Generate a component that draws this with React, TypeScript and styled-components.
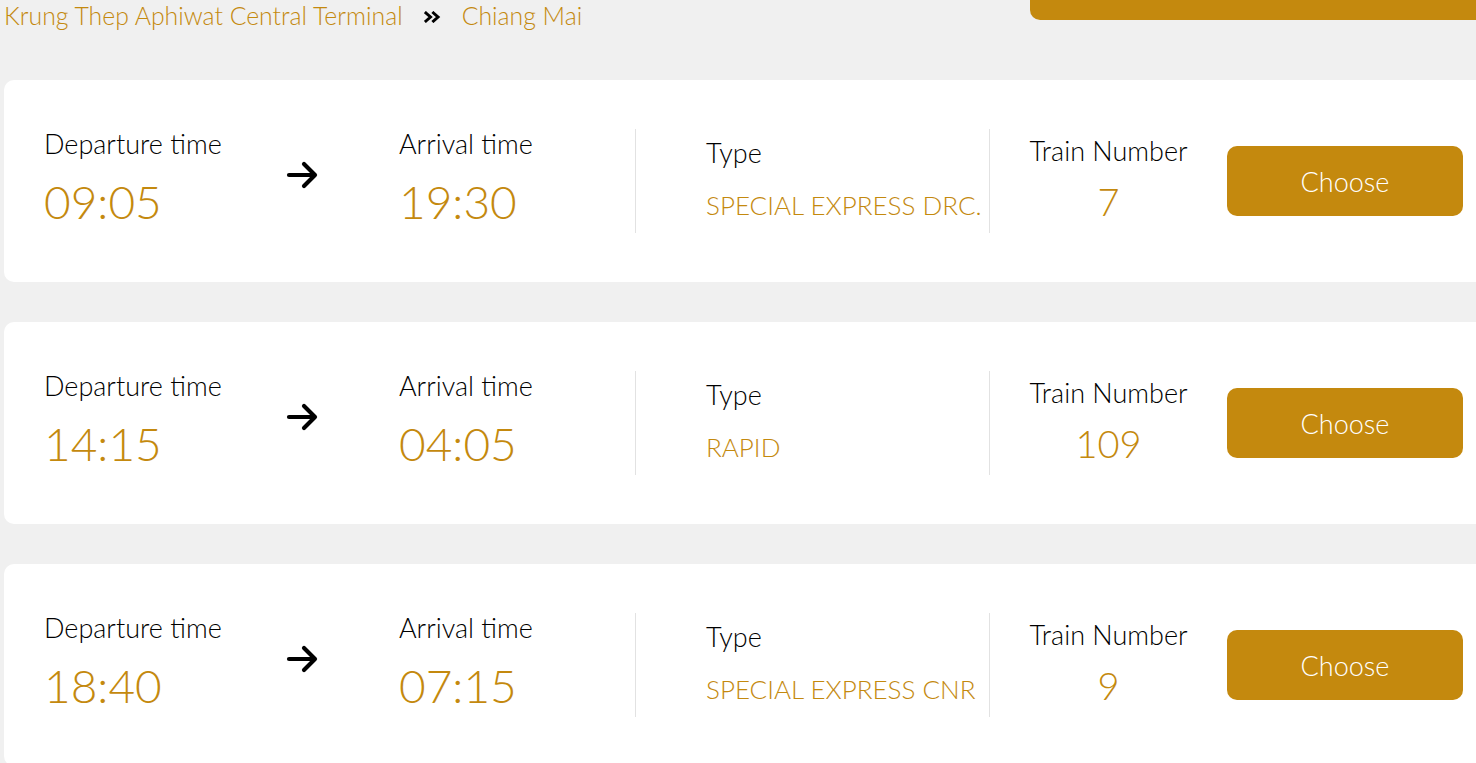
import React from "react";
import styled, { createGlobalStyle } from "styled-components";

const GOLD = "#c4890e";

const Global = createGlobalStyle`
  html, body { margin: 0; padding: 0; background: #f0f0f0; overflow: hidden; }
  body { font-family: Lato, "Noto Sans", sans-serif; font-weight: 300; }
`;

const Page = styled.div`
  width: 1476px;
  height: 763px;
  overflow: hidden;
  background: #f0f0f0;
  display: flex;
  flex-direction: column;
`;

const TopBar = styled.div`
  display: flex;
  align-items: flex-start;
  height: 80px;
  flex-shrink: 0;
`;

const Breadcrumb = styled.div`
  display: flex;
  align-items: center;
  padding-left: 4px;
  font-size: 24.8px;
  line-height: 32px;
  color: ${GOLD};
  gap: 21px;
`;

const SepIcon = styled.svg`
  display: block;
  margin-top: 1px;
`;

const TopButton = styled.div`
  margin-left: auto;
  margin-top: -40px;
  width: 470px;
  height: 60px;
  margin-right: -24px;
  background: ${GOLD};
  border-radius: 10px;
`;

const List = styled.div`
  display: flex;
  flex-direction: column;
  gap: 40px;
  padding-left: 4px;
`;

const Card = styled.div`
  width: 1520px;
  height: 202px;
  flex-shrink: 0;
  background: #fff;
  border-radius: 10px;
  display: flex;
  align-items: center;
  padding-left: 40px;
  box-sizing: border-box;
`;

const TimeBlock = styled.div<{ $w: number }>`
  width: ${(p) => p.$w}px;
  display: flex;
  flex-direction: column;
  margin-top: -4px;
`;

const Label = styled.div`
  font-size: 27px;
  color: #000;
  line-height: 32px;
`;

const BigTime = styled.div`
  font-size: 46px;
  color: ${GOLD};
  line-height: 56px;
  margin-top: 14px;
`;

const ArrowBox = styled.div`
  width: 113px;
  display: flex;
  align-items: center;
  margin-top: -12px;
`;

const Divider = styled.div`
  width: 1px;
  height: 104px;
  background: #e2e2e2;
  align-self: center;
`;

const TypeBlock = styled.div`
  width: 283px;
  padding-left: 70px;
  display: flex;
  flex-direction: column;
  margin-top: -4px;
`;

const TypeValue = styled.div`
  font-size: 26px;
  color: ${GOLD};
  line-height: 32px;
  margin-top: 20px;
  white-space: nowrap;
`;

const NumberBlock = styled.div`
  width: 237px;
  display: flex;
  flex-direction: column;
  align-items: center;
  margin-top: -4px;
`;

const NumberValue = styled.div`
  font-size: 38px;
  color: ${GOLD};
  line-height: 44px;
  margin-top: 12px;
`;

const ChooseButton = styled.button`
  width: 236px;
  height: 70px;
  background: ${GOLD};
  border: none;
  border-radius: 10px;
  color: #fff;
  font-family: Lato, "Noto Sans", sans-serif;
  font-weight: 300;
  font-size: 27px;
  cursor: pointer;
`;

const Arrow = () => (
  <svg width="34" height="32" viewBox="0 0 34 32" fill="none">
    <path d="M3 16H29M18 5L29 16L18 27" stroke="#000" strokeWidth="4.2" strokeLinecap="round" strokeLinejoin="round" />
  </svg>
);

const DoubleChevron = () => (
  <SepIcon width="17" height="12" viewBox="0 0 17 12" fill="none">
    <path d="M2 2L6.5 6L2 10M9.5 2L14 6L9.5 10" stroke="#000" strokeWidth="3" strokeLinecap="square" strokeLinejoin="miter" />
  </SepIcon>
);

const trips = [
  { dep: "09:05", arr: "19:30", type: "SPECIAL EXPRESS DRC.", num: "7" },
  { dep: "14:15", arr: "04:05", type: "RAPID", num: "109" },
  { dep: "18:40", arr: "07:15", type: "SPECIAL EXPRESS CNR", num: "9" },
];

export default function App() {
  return (
    <Page>
      <Global />
      <TopBar>
        <Breadcrumb>
          <span>Krung Thep Aphiwat Central Terminal</span>
          <DoubleChevron />
          <span>Chiang Mai</span>
        </Breadcrumb>
        <TopButton />
      </TopBar>
      <List>
        {trips.map((t, i) => (
          <Card key={i}>
            <TimeBlock $w={242}>
              <Label>Departure time</Label>
              <BigTime>{t.dep}</BigTime>
            </TimeBlock>
            <ArrowBox>
              <Arrow />
            </ArrowBox>
            <TimeBlock $w={236}>
              <Label>Arrival time</Label>
              <BigTime>{t.arr}</BigTime>
            </TimeBlock>
            <Divider />
            <TypeBlock>
              <Label>Type</Label>
              <TypeValue>{t.type}</TypeValue>
            </TypeBlock>
            <Divider />
            <NumberBlock>
              <Label>Train Number</Label>
              <NumberValue>{t.num}</NumberValue>
            </NumberBlock>
            <ChooseButton>Choose</ChooseButton>
          </Card>
        ))}
      </List>
    </Page>
  );
}
